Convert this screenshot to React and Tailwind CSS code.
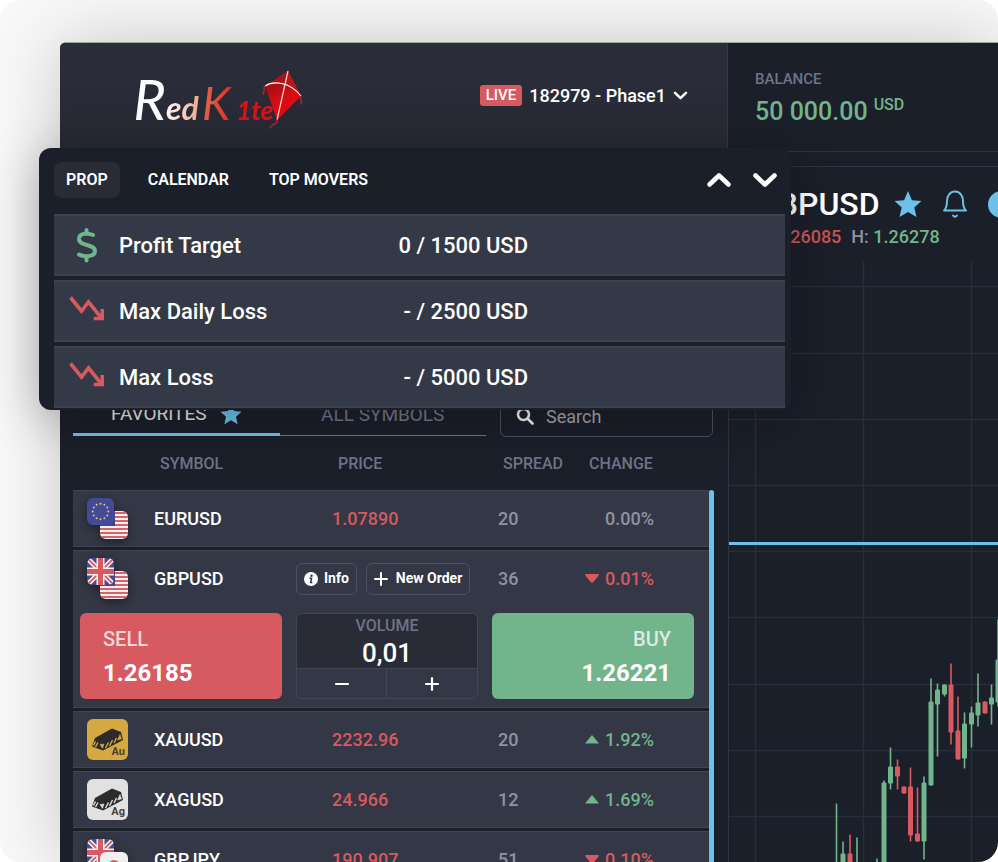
import React from "react";

const GREEN = "#72b48b";
const RED = "#d65a5f";

const limits = [
  { name: "Profit Target", value: "0 / 1500 USD", icon: "dollar" },
  { name: "Max Daily Loss", value: "- / 2500 USD", icon: "down" },
  { name: "Max Loss", value: "- / 5000 USD", icon: "down" },
];

const quotes = [
  { symbol: "EURUSD", price: "1.07890", spread: "20", change: "0.00%", dir: "flat", icon: "eu" },
  { symbol: "GBPUSD", price: "1.26185", spread: "36", change: "0.01%", dir: "down", icon: "gb", open: true },
  { symbol: "XAUUSD", price: "2232.96", spread: "20", change: "1.92%", dir: "up", icon: "gold" },
  { symbol: "XAGUSD", price: "24.966", spread: "12", change: "1.69%", dir: "up", icon: "silver" },
  { symbol: "GBPJPY", price: "190.907", spread: "51", change: "0.10%", dir: "down", icon: "gbjp" },
];

// x, wick top, wick bottom, body top, body bottom, rising
const candles = [
  [107.5, 542, 640, 604, 640, 1],
  [114, 580, 640, 592, 640, 1],
  [121, 573, 640, 592, 640, 0],
  [128, 576, 640, 604, 640, 1],
  [148, 597, 640, 610, 640, 1],
  [155, 519, 640, 521, 640, 1],
  [161.5, 486, 528, 505, 522, 1],
  [168.5, 498, 528, 505, 515, 0],
  [175, 525, 532, 525, 532, 0],
  [181.5, 506, 580, 525, 574, 0],
  [188.5, 526, 580, 572, 580, 0],
  [195, 515, 598, 521, 580, 1],
  [202, 417, 524, 440, 524, 1],
  [208.5, 422, 495, 428, 443, 1],
  [215.5, 423, 435, 423, 433, 1],
  [222, 402, 483, 423, 471, 0],
  [229, 435, 498, 469, 498, 0],
  [235.5, 451, 507, 462, 497, 1],
  [242.5, 445, 486, 451, 463, 1],
  [249, 412, 465, 441, 454, 1],
  [256, 440, 452, 440, 452, 0],
  [262.5, 423, 463, 436, 443, 1],
  [269, 358, 445, 398, 441, 1],
];

const columns = Array.from({ length: 30 }, (_, i) => 26 + i * 108);
const levels = [24, 91, 157, 223, 289, 355, 422, 488, 554, 620, 686];

function Kite() {
  return (
    <svg width="44" height="62" viewBox="0 0 44 62" fill="none" aria-hidden="true">
      <defs>
        <linearGradient id="kite" x1="10" y1="10" x2="30" y2="50" gradientUnits="userSpaceOnUse">
          <stop offset="0" stopColor="#8f1316" />
          <stop offset="0.5" stopColor="#d50c14" />
          <stop offset="1" stopColor="#ee0a12" />
        </linearGradient>
      </defs>
      <path d="M28 2 5 17l12 34 24-24Z" fill="url(#kite)" />
      <path d="M28 2 25 15l16 12Z" fill="#c01519" />
      <path d="M28 2 5 17q10-4 20-2Z" fill="#a81418" />
      <path d="M28 2 17 51" stroke="#f3d9d6" strokeWidth="1.2" />
      <path d="M5 17c8-5 24-5 36 10" stroke="#fff" strokeWidth="1.2" />
      <path d="M5 17c-3 2 1 4-2 8M41 28c-2 2 2 4 0 7M17 51c2 5-5 3-7 8" stroke="#b8282c" strokeWidth="1.4" strokeLinecap="round" />
    </svg>
  );
}

function Logo() {
  return (
    <a href="#home" aria-label="Red K1te" className="ml-[60px] flex h-[64px] items-start pt-1">
      <span className="flex items-baseline font-['Lato','Liberation_Sans',sans-serif] italic leading-[60px]">
        <span className="w-[46px] text-right text-[56px] font-normal text-white">R</span>
        <span className="w-[36px] bg-gradient-to-r from-white to-[#eda184] bg-clip-text text-[32px] leading-10 font-bold text-transparent">ed</span>
        <span className="w-[34px] bg-gradient-to-r from-[#e2674c] to-[#dd1c1a] bg-clip-text text-[46px] leading-[56px] font-normal text-transparent">K</span>
        <span className="w-[38px] text-[26px] font-bold text-[#e00f16]">1te</span>
      </span>
      <span className="-ml-[14px]">
        <Kite />
      </span>
    </a>
  );
}

function StarIcon({ size }) {
  return (
    <svg width={size} height={size} viewBox="0 0 28 28" aria-hidden="true">
      <path d="m14 1 3.9 9.2 9.6.8-7.2 6.600 2.200 9.400-8.500-5-8.500 5 2.200-9.400L.5 11l9.600-.8Z" fill="#6cc1e8" />
    </svg>
  );
}

function Chevron({ up, size = 26, width = 4.600 }) {
  return (
    <svg width={size} height={size} viewBox="0 0 26 26" fill="none" stroke="white" strokeWidth={width} strokeLinecap="round" strokeLinejoin="round" aria-hidden="true">
      <path d={up ? "m3.500 17.500 9.500-9 9.500 9" : "m3.500 8.500 9.500 9 9.500-9"} />
    </svg>
  );
}

function LimitIcon({ kind }) {
  if (kind === "dollar") {
    return (
      <svg width="36" height="36" viewBox="0 0 36 36" fill="none" stroke={GREEN} strokeWidth="4" strokeLinecap="round" aria-hidden="true">
        <path d="M24 8C21 6.500 10 5 10 12c0 7.500 16 4.500 16 12 0 6.500-12 6-16 3.500" />
        <path d="M17.500 3v3M17.500 31v2.500" />
      </svg>
    );
  }
  return (
    <svg width="36" height="36" viewBox="0 0 36 36" fill="none" stroke={RED} strokeWidth="3.600" aria-hidden="true">
      <path d="M1.500 4.500 12.500 18l7-9L32.500 25" />
      <path d="M33.200 16v9.500h-8.500" />
      <path d="M28 26h6v-6Z" fill={RED} stroke="none" />
    </svg>
  );
}

function Flags({ kind }) {
  const stripes = [14, 18, 22, 26, 30, 34, 38];
  const id = "flag-" + kind;
  const jp = kind === "gbjp";
  const second = (
    <g clipPath={`url(#${id}-b)`}>
      <rect x="13" y="13" width="28" height="28" fill="#f1eff0" />
      {jp ? (
        <circle cx="27" cy="27" r="6" fill={RED} />
      ) : (
        <>
          {stripes.map((y) => (
            <rect key={y} x="13" y={y} width="28" height="2" fill="#d4646a" />
          ))}
          <rect x="13" y="13" width="15" height="15" fill="#42468f" />
        </>
      )}
    </g>
  );
  const first = (
    <g clipPath={`url(#${id}-a)`}>
      <rect width="27" height="27" fill="#454a96" />
      {kind === "eu" ? (
        Array.from({ length: 12 }, (_, i) => (
          <circle key={i} cx={13.5 + 7.8 * Math.cos((i * Math.PI) / 6)} cy={13.5 + 7.8 * Math.sin((i * Math.PI) / 6)} r="1" fill="#e3c964" />
        ))
      ) : (
        <>
          <path d="m0 0 27 27M27 0 0 27" stroke="#f1eff0" strokeWidth="5" />
          <path d="m0 0 27 27M27 0 0 27" stroke={RED} strokeWidth="1.800" />
          <path d="M13.500 0v27M0 13.500h27" stroke="#f1eff0" strokeWidth="8" />
          <path d="M13.500 0v27M0 13.500h27" stroke={RED} strokeWidth="5" />
        </>
      )}
    </g>
  );
  return (
    <svg width="41" height="41" viewBox="0 0 41 41" className="shrink-0 overflow-visible drop-shadow-[0_3px_5px_rgba(0,0,0,0.4)]" aria-hidden="true">
      <clipPath id={`${id}-a`}>
        <rect width="27" height="27" rx="6" />
      </clipPath>
      <clipPath id={`${id}-b`}>
        <rect x="13" y="13" width="28" height="28" rx="6" />
      </clipPath>
      {jp ? first : second}
      {jp ? second : first}
    </svg>
  );
}

function Metal({ kind }) {
  const gold = kind === "gold";
  const base = gold ? "#d6a840" : "#e1e1e2";
  return (
    <span className={`relative block size-[41px] shrink-0 rounded-[6px] ${gold ? "bg-[#d6a840]" : "bg-[#e1e1e2]"}`}>
      <svg width="41" height="41" viewBox="0 0 41 41" fill="none" aria-hidden="true">
        <path d="M8 19 25 9.500l9 3.500 2 8-20 10.500L5 27.500Z" fill="#2b2b2b" />
        <g stroke={base} strokeWidth="1.400">
          <path d="m8.500 22.500-2 4M11 23.500l-2.500 4.500M21.500 23.500 18.500 29M25.500 21 22.500 27M29.500 19l-2.500 5" />
          <path d="m13 25.500 2.500 4 1.500-4.500ZM33 15.500l-2.500 5.500 4-1Z" fill={base} strokeWidth="0.500" />
        </g>
      </svg>
      <span className="absolute bottom-[3px] right-[3px] text-[11px] leading-none font-bold text-[#4a4337]">{gold ? "Au" : "Ag"}</span>
    </span>
  );
}

function SymbolIcon({ kind }) {
  return kind === "gold" || kind === "silver" ? <Metal kind={kind} /> : <Flags kind={kind} />;
}

function Change({ dir, value }) {
  const color = dir === "up" ? "text-[#72b48b]" : dir === "down" ? "text-[#d65a5f]" : "text-[#8f92a5]";
  return (
    <span className={`flex items-center justify-end gap-[6px] ${color}`}>
      {dir !== "flat" && (
        <svg width="14" height="9" viewBox="0 0 14 9" fill="currentColor" className="shrink-0" aria-hidden="true">
          <path d={dir === "up" ? "M7 0 14 8.500H0Z" : "M1 0h12q1.500 0 .5 1.500L8 8.500H6L.5 1.500Q-.5 0 1 0Z"} />
        </svg>
      )}
      {value}
    </span>
  );
}

function Ticket() {
  return (
    <div className="flex gap-[14px] pl-[7px] pr-[15px]">
      <button type="button" className="flex h-[86px] flex-1 flex-col items-start justify-center gap-[6px] rounded-[6px] bg-[#d65a5f] px-[23px] leading-7">
        <span className="text-[20px] font-medium text-white/75">SELL</span>
        <span className="text-[24px] font-bold text-white">1.26185</span>
      </button>
      <div className="flex h-[86px] w-[182px] flex-col overflow-hidden rounded-[6px] border border-[#434655]">
        <label htmlFor="volume" className="bg-[#292c37] text-center text-[16px] leading-6 text-[#6f7388]">VOLUME</label>
        <input id="volume" defaultValue="0,01" className="h-[30px] w-full bg-[#292c37] text-center text-[26px] font-medium text-white outline-none" />
        <div className="grid flex-1 grid-cols-2 divide-x divide-[#434655] border-t border-[#434655]">
          {["Decrease volume", "Increase volume"].map((label, i) => (
            <button key={label} type="button" aria-label={label} className="flex items-center justify-center">
              <svg width="16" height="16" viewBox="0 0 16 16" stroke="white" strokeWidth="2.200" strokeLinecap="round" aria-hidden="true">
                <path d={i ? "M2 8h12M8 2v12" : "M2 8h12"} />
              </svg>
            </button>
          ))}
        </div>
      </div>
      <button type="button" className="flex h-[86px] flex-1 flex-col items-end justify-center gap-[6px] rounded-[6px] bg-[#72b48b] px-[23px] leading-7">
        <span className="text-[20px] font-medium text-white/75">BUY</span>
        <span className="text-[24px] font-bold text-white">1.26221</span>
      </button>
    </div>
  );
}

const edge = "bg-[#343846] bg-clip-padding border-[#1b1f2a]";
const cell = `h-[60px] border-b-[3px] shadow-[inset_0_1px_#414453,inset_0_-1px_#414453] ${edge}`;
const openCell = `h-[60px] pb-[3px] shadow-[inset_0_1px_#414453] ${edge}`;
const pill = "flex h-[32px] items-center rounded-[6px] border border-[#4b4f61] px-[7px] text-[14px] font-bold text-white";

function Quotes() {
  return (
    <div className="flex">
      <table className="w-full table-fixed border-separate border-spacing-0 text-left text-[18px] font-medium">
        <colgroup>
          <col className="w-[223px]" />
          <col className="w-[202px]" />
          <col className="w-[91px]" />
          <col />
        </colgroup>
        <thead className="text-[16px] text-[#6f7388]">
          <tr className="h-[53px]">
            <th className="pl-[87px] font-medium">SYMBOL</th>
            <th className="pl-[42px] font-medium">PRICE</th>
            <th className="pl-[5px] font-medium">SPREAD</th>
            <th className="font-medium">CHANGE</th>
          </tr>
        </thead>
        <tbody>
          {quotes.map((q) => {
            const c = q.open ? openCell : cell;
            return (
              <React.Fragment key={q.symbol}>
                <tr>
                  <td className={c}>
                    <div className="flex items-center gap-[26px] pl-[14px] text-white">
                      <SymbolIcon kind={q.icon} />
                      {q.symbol}
                    </div>
                  </td>
                  <td className={c}>
                    {q.open ? (
                      <div className="flex gap-[9px]">
                        <button type="button" className={`${pill} gap-[6px]`}>
                          <svg width="14" height="14" viewBox="0 0 14 14" aria-hidden="true">
                            <circle cx="7" cy="7" r="7" fill="white" />
                            <circle cx="7.500" cy="3.700" r="1.200" fill="#343846" />
                            <path d="M5.500 6.200h2l-.8 4.300h1.600" fill="none" stroke="#343846" strokeWidth="1.500" />
                          </svg>
                          Info
                        </button>
                        <button type="button" className={`${pill} gap-[8px]`}>
                          <svg width="14" height="14" viewBox="0 0 14 14" stroke="white" strokeWidth="2" strokeLinecap="round" aria-hidden="true">
                            <path d="M1 7h12M7 1v12" />
                          </svg>
                          New Order
                        </button>
                      </div>
                    ) : (
                      <span className="pl-[36px] text-[#d65a5f]">{q.price}</span>
                    )}
                  </td>
                  <td className={`${c} text-[#8f92a5]`}>{q.spread}</td>
                  <td className={`${c} pr-[55px]`}>
                    <Change dir={q.dir} value={q.change} />
                  </td>
                </tr>
                {q.open && (
                  <tr>
                    <td colSpan={4} className={`h-[101px] border-b-[3px] pt-[3px] align-top shadow-[inset_0_-1px_#414453] ${edge}`}>
                      <Ticket />
                    </td>
                  </tr>
                )}
              </React.Fragment>
            );
          })}
        </tbody>
      </table>
      <div className="mt-[53px] w-[5px] shrink-0 rounded-t-full bg-[#6cc1e8]" />
    </div>
  );
}

function Watchlist() {
  return (
    <section className="pl-[13px] pr-[14px] pt-[243px]">
      <div className="flex h-[42px] gap-[14px] pr-px">
        <div className="flex flex-1 pb-px text-[19px] text-[#73778c]">
          <button type="button" className="flex flex-1 items-center justify-center gap-[13px] border-b-[3px] border-[#6cc1e8] text-[#e4e4e6]">
            FAVORITES
            <StarIcon size={22} />
          </button>
          <button type="button" className="flex-1 border-b border-[#73778c]">ALL SYMBOLS</button>
        </div>
        <div className="flex w-[213px] items-center gap-[12px] rounded-[6px] border border-[#4b4f61] px-[15px]">
          <svg width="18" height="18" viewBox="0 0 18 18" fill="none" stroke="#f0f0f0" strokeWidth="2.600" strokeLinecap="round" className="shrink-0" aria-hidden="true">
            <circle cx="7.500" cy="7.500" r="5.500" />
            <path d="m12 12 4.500 4.500" />
          </svg>
          <input aria-label="Search" placeholder="Search" className="w-full min-w-0 bg-transparent text-[18px] text-white outline-none placeholder:text-[#a5a6ad]" />
        </div>
      </div>
      <Quotes />
    </section>
  );
}

function Chart() {
  return (
    <svg className="block h-[640px] w-full" aria-label="GBPUSD chart">
      {columns.map((x) => (
        <path key={x} d={`M${x + 0.5} 0V640`} stroke="#2a2d39" strokeWidth="1.500" />
      ))}
      {levels.map((y) => (
        <path key={y} d={`M0 ${y + 0.5}H3000`} stroke="#2a2d39" strokeWidth="1.500" />
      ))}
      <rect x="0" y="280" width="100%" height="3" fill="#6cc1e8" />
      {candles.map(([x, top, bottom, open, close, rising]) => (
        <g key={x} fill={rising ? GREEN : RED}>
          <rect x={x - 0.800} y={top - 0.500} width="1.600" height={bottom - top} />
          <rect x={x - 2.500} y={open - 0.500} width="5" height={close - open} rx="1" />
        </g>
      ))}
    </svg>
  );
}

function Market() {
  return (
    <section className="mt-[14px] flex-1 overflow-hidden border-l border-t border-[#323541]">
      <div className="h-[95px] pl-[27px] pt-[16px]">
        <div className="flex h-[42px] items-center whitespace-nowrap">
          <h1 className="mr-[14px] text-[32px] font-medium text-white">GBPUSD</h1>
          <button type="button" aria-label="Favorite" className="mr-[20px]">
            <StarIcon size={28} />
          </button>
          <button type="button" aria-label="Alerts" className="mr-[20px]">
            <svg width="26" height="28" viewBox="0 0 26 28" fill="none" stroke="#6cc1e8" strokeWidth="2" strokeLinecap="round" strokeLinejoin="round" aria-hidden="true">
              <path d="M2 20.500h22c-2.500-2-3-5-3-9.500 0-5-3-9.500-8-9.500S5 6 5 11c0 4.500-.5 7.500-3 9.500Z" />
              <path d="M11 25.500c1 1.500 3 1.500 4 0" />
            </svg>
          </button>
          <button type="button" aria-label="Info" className="shrink-0">
            <svg width="27" height="27" viewBox="0 0 27 27" aria-hidden="true">
              <circle cx="13.500" cy="13.500" r="13.500" fill="#6cc1e8" />
              <path d="M10 12h4v9" fill="none" stroke="#1b1f2a" strokeWidth="2.500" />
            </svg>
          </button>
        </div>
        <p className="flex gap-[10px] whitespace-nowrap text-[18px] leading-6 font-medium text-[#8f92a5]">
          <span>L: <span className="text-[#c9545a]">1.26085</span></span>
          <span>H: <span className="text-[#72b48b]">1.26278</span></span>
        </p>
      </div>
      <Chart />
    </section>
  );
}

function PropPanel() {
  return (
    <section className="absolute left-[39px] top-[148px] w-[752px] rounded-[12px] bg-[#1b1f2a] pb-[2px] pl-[15px] pr-[6px] pt-[14px] shadow-[0_8px_50px_rgba(0,0,0,0.3)]">
      <div className="mb-[16px] flex h-[36px] items-center text-[16px] font-semibold text-white">
        <nav className="flex flex-1 items-center gap-[16px]">
          <button type="button" className="h-[36px] rounded-[8px] bg-[#292c37] px-[12px]">PROP</button>
          <button type="button" className="h-[36px] px-[12px]">CALENDAR</button>
          <button type="button" className="h-[36px] px-[12px]">TOP MOVERS</button>
        </nav>
        <div className="flex gap-[20px] pr-[7px]">
          <button type="button" aria-label="Previous"><Chevron up /></button>
          <button type="button" aria-label="Next"><Chevron /></button>
        </div>
      </div>
      <dl className="flex flex-col gap-[4px] text-[22px] font-medium text-white">
        {limits.map((l) => (
          <div key={l.name} className="flex h-[62px] items-center border-y-2 border-[#3e4150] bg-[#343947] pl-[15px]">
            <LimitIcon kind={l.icon} />
            <dt className="w-[220px] pl-[14px]">{l.name}</dt>
            <dd className="w-[203px] text-right">{l.value}</dd>
          </div>
        ))}
      </dl>
    </section>
  );
}

export default function App() {
  return (
    <div className="bg-white font-[Roboto,'Liberation_Sans',sans-serif]">
      <main className="relative h-screen overflow-hidden rounded-[20px] bg-[#f8f8f8] pl-[60px] pt-[42px]">
        <div className="flex h-full rounded-tl-[6px] border-t border-[#92ac95] bg-[#1b1f2a] shadow-[0_0_70px_rgba(0,0,0,0.2)]">
          <div className="w-[668px] shrink-0">
            <header className="flex h-[109px] items-start justify-between rounded-tl-[5px] border-b border-r border-[#363945] bg-gradient-to-b from-[#2b2e3a] to-[#272a35] pr-[39px] pt-[22px]">
              <Logo />
              <button type="button" className="mt-[16px] flex h-[28px] items-center gap-[7px] text-[18px] font-medium text-white">
                <span className="rounded-[3px] bg-[#d65a5f] px-[6px] text-[15px] leading-[21px]">LIVE</span>
                182979 - Phase1
                <Chevron size={15} width={4.500} />
              </button>
            </header>
            <Watchlist />
          </div>
          <div className="flex min-w-0 flex-1 flex-col">
            <header className="h-[109px] shrink-0 border-b border-[#323541] pl-[27px] pt-[26px]">
              <p className="text-[15px] leading-5 font-medium text-[#6f7388]">BALANCE</p>
              <p className="flex items-start gap-[6px] whitespace-nowrap text-[25px] leading-[46px] font-medium text-[#72b48b]">
                50 000.00
                <span className="text-[16px] leading-[32px]">USD</span>
              </p>
            </header>
            <Market />
          </div>
        </div>
        <PropPanel />
      </main>
    </div>
  );
}
